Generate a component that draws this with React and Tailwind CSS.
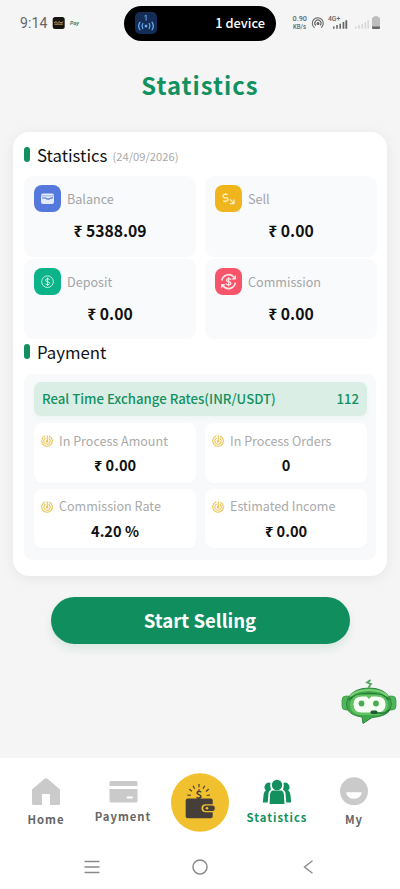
const stats = [
  { label: 'Balance', value: '₹ 5388.09', color: 'bg-[#5578dd]', icon: <BalanceIcon /> },
  { label: 'Sell', value: '₹ 0.00', color: 'bg-[#f0b41c]', icon: <SellIcon /> },
  { label: 'Deposit', value: '₹ 0.00', color: 'bg-[#0bb389]', icon: <DepositIcon /> },
  { label: 'Commission', value: '₹ 0.00', color: 'bg-[#f8556a]', icon: <CommissionIcon /> },
];

const payments = [
  { label: 'In Process Amount', value: '₹ 0.00' },
  { label: 'In Process Orders', value: '0' },
  { label: 'Commission Rate', value: '4.20 %' },
  { label: 'Estimated Income', value: '₹ 0.00' },
];

function BalanceIcon() {
  return (
    <svg width="27" height="27" viewBox="0 0 27 27">
      <rect x="7" y="8.5" width="13" height="10.5" rx="2" fill="#e3eafc" />
      <path d="M7.2 10.8h12.6" stroke="#8ea6ea" strokeWidth=".8" fill="none" />
      <path d="M8 13h3.5q2.500 2 5 .3l2.500-.7" stroke="#5578dd" strokeWidth="1.100" fill="none" />
    </svg>
  );
}

function SellIcon() {
  return (
    <svg width="27" height="27" viewBox="0 0 27 27" fill="none" stroke="#fff3cf" strokeWidth="1.2">
      <path d="M12.6 9.4H10q-2 0-2 1.700t2 1.700h1q2 0 2 1.700t-2 1.700H8M10.400 8v1.400M10.400 16.200v1.300M14.900 14.300l3.900 3.900M19 14.600v4h-4.200" />
    </svg>
  );
}

function DepositIcon() {
  return (
    <svg width="27" height="27" viewBox="0 0 27 27" fill="none" stroke="#c9f2e6" strokeWidth="1">
      <circle cx="13.5" cy="13.7" r="5.800" />
      <path d="M15.700 11.800q-.4-1-2.200-1t-2.100 1.400q0 1.200 2.100 1.500t2.200 1.600q-.2 1.400-2.200 1.400t-2.300-1.200M13.500 9.600v8.200" />
    </svg>
  );
}

function CommissionIcon() {
  return (
    <svg width="27" height="27" viewBox="0 0 27 27" fill="none" stroke="#ffe6e9" strokeWidth="1.700">
      <path d="M6.800 12.500a7 7 0 0 1 12.300-3.200M20.400 14.700a7 7 0 0 1-12.400 3.200" />
      <path d="M20.900 7v4.500h-4.400zM6.100 20.500V16h4.500z" fill="#ffe6e9" stroke="none" />
      <path d="M16 11.700q-.4-1.100-2.400-1.100t-2.200 1.500q0 1.200 2.200 1.500t2.400 1.700q-.2 1.500-2.400 1.500T11 15.600M13.600 9.200v9.100" strokeWidth="1.200" />
    </svg>
  );
}

function SwirlIcon() {
  return (
    <svg width="12" height="12" viewBox="0 0 12 12" fill="none" stroke="#e8c558" strokeWidth="1.100" strokeLinecap="round">
      <path d="M6.300.7v5.500M8.300 1.200A5.300 5.300 0 1 1 4 1.100M8 3.500A3.200 3.200 0 1 1 4.300 3.300" />
      <circle cx="6.100" cy="6.300" r=".8" />
    </svg>
  );
}

function StatusBar() {
  return (
    <header className="flex h-[46px] items-center pl-[20px] text-[#666]">
      <span className="w-[32px] font-[Roboto] text-[14px] leading-none tracking-[0.1px]">9:14</span>
      <svg width="30" height="14" viewBox="0 0 30 14">
        <rect x="0.7" y="1" width="12" height="12" rx="2.5" fill="#17130f" />
        <path d="M2 7l2-1.4 1.5 1.4L7 5.6 9 7l2.300-1.200M2.500 8.200h8.400" stroke="#bd9b62" fill="none" strokeWidth="1" />
        <rect x="17" y="1" width="12" height="12" rx="2.5" fill="#eff8f5" />
        <text x="22.500" y="9" fontSize="5.5" fontWeight="700" fontStyle="italic" textAnchor="middle" fill="#4d7d70" fontFamily="Roboto">Pay</text>
      </svg>
      <div className="ml-[42px] flex h-[35px] w-[152px] items-center justify-between rounded-full bg-black pl-[11px] pr-[11px]">
        <svg width="22" height="22" viewBox="0 0 22 22" fill="none" stroke="#67a9ed" strokeWidth="1.3" strokeLinecap="round">
          <rect width="22" height="22" rx="5" fill="#132d57" stroke="none" />
          <path d="M9.800 4l1.300-.8v5" strokeWidth="1" />
          <circle cx="11" cy="14" r="1.5" fill="#67a9ed" stroke="none" />
          <path d="M7.800 11.500q-1.600 2.500 0 5M14.200 11.500q1.600 2.500 0 5M4.900 10.300q-2.500 3.700 0 7.400M17.100 10.300q2.500 3.700 0 7.400" />
        </svg>
        <span className="font-['Noto_Sans_CJK_SC'] text-[12.800px] font-medium leading-none text-white">1 device</span>
      </div>
      <svg width="92" height="20" viewBox="0 0 92 20" className="ml-[16px]" fontFamily="Roboto" fill="#666">
        <text x="0.5" y="8.200" fontSize="6.800" fontWeight="500" textLength="14.5" lengthAdjust="spacingAndGlyphs">0.90</text>
        <text x="1" y="15.800" fontSize="6.300" fontWeight="500" textLength="13" lengthAdjust="spacingAndGlyphs">KB/s</text>
        <g fill="none" stroke="#666" strokeWidth="1.1">
          <path d="M22.600 14.800A5.500 5.500 0 1 1 29.200 14.600M23.800 12.500A3.100 3.100 0 1 1 28.200 12.300" />
          <circle cx="26" cy="10.500" r="1" fill="#666" />
        </g>
        <text x="36" y="7.500" fontSize="6.800" fontWeight="500">4G+</text>
        <path d="M41 13.500h1.500v2.300H41zM44.200 12h1.600v3.800h-1.600zM47.400 10.700H49v5.100h-1.600zM50.600 9h1.700v6.800h-1.700zM53.400 7.300h1.800v8.500h-1.800z" />
        <path fill="#d7d7d7" d="M63 13.500h1.600v2.300H63zM66.200 12h1.600v3.800h-1.600zM69.400 10.700H71v5.100h-1.600zM72.600 9h1.600v6.800h-1.600zM75.400 7.300H77v8.500h-1.600z" />
        <rect x="80" y="4" width="8" height="12" rx="1.500" fill="#bebebe" />
        <rect x="82" y="3.200" width="4" height="1.500" fill="#bebebe" />
        <path d="M80 13.500h8v1q0 1.500-1.500 1.500h-5q-1.500 0-1.500-1.500z" />
      </svg>
    </header>
  );
}

function SectionTitle({ children, note }) {
  return (
    <div className="flex h-[26px] items-center">
      <i className="mb-[3px] h-[15px] w-[6px] rounded-full bg-[#12915f]" />
      <h2 className="-mt-[2px] ml-[7px] text-[16.800px] leading-[26px] text-[#111]">{children}</h2>
      {note && <span className="ml-[5px] text-[11.200px] text-[#aaa]">{note}</span>}
    </div>
  );
}

function Bot() {
  return (
    <svg width="58" height="48" viewBox="0 0 58 48">
      <path d="M30.500 2l-3.500 2.500 4 1.500-2.500 3.500" stroke="#4aa95a" strokeWidth="1.700" fill="none" />
      <rect x="2" y="18" width="10" height="14" rx="4" fill="#4fb45a" stroke="#379945" strokeWidth=".7" />
      <rect x="46" y="18" width="10" height="14" rx="4" fill="#4fb45a" stroke="#379945" strokeWidth=".7" />
      <path d="M29 10Q44 10 50 20q3 6 0 12-4 6.500-18 7.500l-9 6-1-6.500Q11 37.500 7.500 31.500q-2.500-6 .5-11.500Q14 10 29 10z" fill="#3fa94c" stroke="#2b8a3c" strokeWidth="1" />
      <path d="M10 18.500Q16 12 29 12t19 6.500" fill="none" stroke="#7fd07b" strokeWidth="2" />
      <path d="M9 22Q14 15.500 29 15.500T49 22" fill="none" stroke="#237b35" strokeWidth="1.700" />
      <rect x="10" y="16.500" width="38" height="20.500" rx="10" fill="#63c263" />
      <path d="M22 18.500h4.500l2.500 2.500 2.500-2.500h5q9 0 9 8t-9 8H22q-8.500 0-8.500-8t8.500-8z" fill="#f7fff5" />
      <circle cx="21.500" cy="25.500" r="2.900" fill="#4aaa55" />
      <circle cx="36" cy="25.500" r="2.900" fill="#4aaa55" />
      <path d="M33 35h6q7 1 11-4" fill="none" stroke="#287b39" strokeWidth="1.500" />
      <rect x="30.500" y="32.500" width="7" height="3.500" rx="1.700" fill="#1b5c2d" />
    </svg>
  );
}

function WalletIcon() {
  return (
    <svg width="58" height="59" viewBox="0 0 58 59">
      <ellipse cx="29" cy="29.500" rx="29" ry="29.300" fill="#f1c02f" />
      <text x="28" y="25.500" fontSize="11.500" fontWeight="700" fill="#463e38" textAnchor="middle">$</text>
      <path d="M16.300 22l3.400.4M18.300 16.300l2.700 2M22 12.700l1.700 3M28 11v3.300M33.700 12.700l-1.700 3M37.700 16L35 18.700M39 22l-3.300.5" stroke="#463e38" strokeWidth="1.200" />
      <rect x="14.700" y="25.500" width="27" height="19.700" rx="2" fill="#463e38" />
      <path d="M42 31.300h-7.500a4 4 0 0 0 0 8H42" fill="#f1c02f" />
      <rect x="32.300" y="32.500" width="11.500" height="5.600" rx="2.800" fill="#463e38" />
      <circle cx="36" cy="35.300" r="1.300" fill="#f1c02f" />
    </svg>
  );
}

function NavItem({ label, children, className }) {
  return (
    <div className={`flex flex-col items-center ${className}`}>
      {children}
      <span className="text-[11.300px] font-bold leading-[16px] tracking-[1px]">{label}</span>
    </div>
  );
}

export default function App() {
  return (
    <div className="flex h-[889px] w-[400px] flex-col overflow-hidden bg-[#f5f5f5] font-['Noto_Sans_CJK_SC','Noto_Sans',sans-serif]">
      <StatusBar />
      <h1 className="mt-[19px] h-[39px] text-center text-[23.800px] font-bold leading-[39px] tracking-[1px] text-[#12915f]">Statistics</h1>

      <main className="mx-[13px] mt-[28px] h-[444px] shrink-0 rounded-[16px] bg-white px-[11px] pt-[11px] shadow-[0_2px_14px_rgba(0,0,0,0.07)]">
        <SectionTitle note="(24/09/2026)">Statistics</SectionTitle>
        <div className="mt-[7px] grid grid-cols-[172px_172px] gap-x-[9px] gap-y-[2px]">
          {stats.map((s) => (
            <section key={s.label} className="h-[80.500px] rounded-[9px] bg-[#f9fafc] pt-[9px]">
              <div className="flex items-center pl-[10px]">
                <span className={`h-[27px] w-[27px] rounded-[8px] ${s.color}`}>{s.icon}</span>
                <span className="ml-[6px] text-[12.600px] leading-[27px] text-[#a3a5a8]">{s.label}</span>
              </div>
              <p className="mt-[7px] text-center text-[15.700px] font-bold leading-[24px] text-[#111]">{s.value}</p>
            </section>
          ))}
        </div>

        <div className="mt-[1px]"><SectionTitle>Payment</SectionTitle></div>
        <section className="mt-[8px] h-[186px] rounded-[9px] bg-[#f7f9fa] px-[10px] pt-[8px]">
          <div className="flex h-[34px] w-[333px] items-center justify-between rounded-[7px] bg-[#dbeee6] px-[8px] text-[13.200px] font-medium text-[#12915f] shadow-[0_2px_5px_rgba(18,145,95,0.04)]">
            <span>Real Time Exchange Rates(INR/USDT)</span>
            <span>112</span>
          </div>
          <div className="mt-[7px] grid grid-cols-[162px_162px] gap-x-[9px] gap-y-[6px]">
            {payments.map((p) => (
              <div key={p.label} className="h-[59.500px] rounded-[8px] bg-white pt-[8px] shadow-[0_1px_3px_rgba(0,0,0,0.02)]">
                <div className="flex h-[20px] items-center gap-[6px] pl-[7px] text-[12.550px] text-[#aaa]">
                  <SwirlIcon />
                  <span>{p.label}</span>
                </div>
                <p className="mt-[3px] text-center text-[14.600px] font-bold leading-[22px] text-[#111]">{p.value}</p>
              </div>
            ))}
          </div>
        </section>
      </main>

      <button className="mx-auto mt-[21px] h-[47px] w-[299px] shrink-0 rounded-full bg-[#108e5e] pb-[1px] text-[18.600px] font-bold text-white shadow-[0_5px_10px_rgba(16,142,94,0.12)]">Start Selling</button>
      <div className="mr-[2px] mt-[34px] flex h-[48px] shrink-0 justify-end"><Bot /></div>

      <footer className="mt-[32px] flex h-[131px] shrink-0 flex-col bg-white">
        <nav className="grid h-[92px] grid-cols-[77px_77px_77px_77px_77px] items-start px-[7.500px] text-[#666]">
          <NavItem label="Home" className="pt-[19px]">
            <svg width="30" height="34" viewBox="0 0 30 34" fill="#cacaca"><path d="M1 12.500L13.500 1.800q1.500-1.300 3 0L29 12.500V26.500q0 1.500-1.500 1.500H19V17h-8v11H2.500Q1 28 1 26.500z" /></svg>
          </NavItem>
          <NavItem label="Payment" className="pt-[20px]">
            <svg width="29" height="30" viewBox="0 0 29 30" fill="#cacaca"><path d="M2 3h25q1.500 0 1.500 1.500V8H.5V4.500Q.5 3 2 3zM.5 11h28v12q0 1.500-1.500 1.500H2Q.5 24.500.5 23z" /><rect x="17.500" y="18.500" width="6.500" height="2" rx="1" fill="white" /></svg>
          </NavItem>
          <div className="flex justify-center pt-[15px]"><WalletIcon /></div>
          <NavItem label="Statistics" className="pt-[20px] text-[#12915f]">
            <svg width="30" height="31" viewBox="0 0 30 31" fill="#12915f">
              <circle cx="15" cy="7" r="5.200" />
              <path d="M10.800 12.500h8.400q2.200.5 2.700 4l.5 9.500H7.600l.5-9.500q.5-3.500 2.700-4z" />
              <path d="M8.500 5a4.400 4.400 0 0 0-4.700 7.200Q2 13.400 1.600 16.400L.8 24.500h4.900l.9-10q.4-1.600 2.400-2.700-1.500-3.200-.5-6.800zM21.500 5a4.400 4.400 0 0 1 4.700 7.200q1.800 1.200 2.200 4.200l.8 8.100h-4.900l-.9-10q-.4-1.600-2.400-2.700 1.500-3.200.5-6.800z" />
            </svg>
          </NavItem>
          <NavItem label="My" className="pt-[19px]">
            <svg width="28" height="34" viewBox="0 0 28 34"><circle cx="14" cy="14.300" r="14" fill="#cacaca" /><path d="M6.300 15.300h15.400a7.700 6.500 0 0 1-15.400 0z" fill="white" /></svg>
          </NavItem>
        </nav>
        <div className="grid h-[34px] grid-cols-[108px_108px_108px] items-center justify-center justify-items-center">
          <svg width="16" height="14" viewBox="0 0 16 14" stroke="#8a8a8a" strokeWidth="1.400"><path d="M.5 1.500h15M.5 7h15M.5 12.500h15" /></svg>
          <svg width="16" height="16" viewBox="0 0 16 16" fill="none" stroke="#8a8a8a" strokeWidth="1.500"><circle cx="8" cy="8" r="7" /></svg>
          <svg width="10" height="14" viewBox="0 0 10 14" fill="none" stroke="#8a8a8a" strokeWidth="1.400"><path d="M9.500.8L1.500 7l8 6.200" /></svg>
        </div>
      </footer>
    </div>
  );
}
